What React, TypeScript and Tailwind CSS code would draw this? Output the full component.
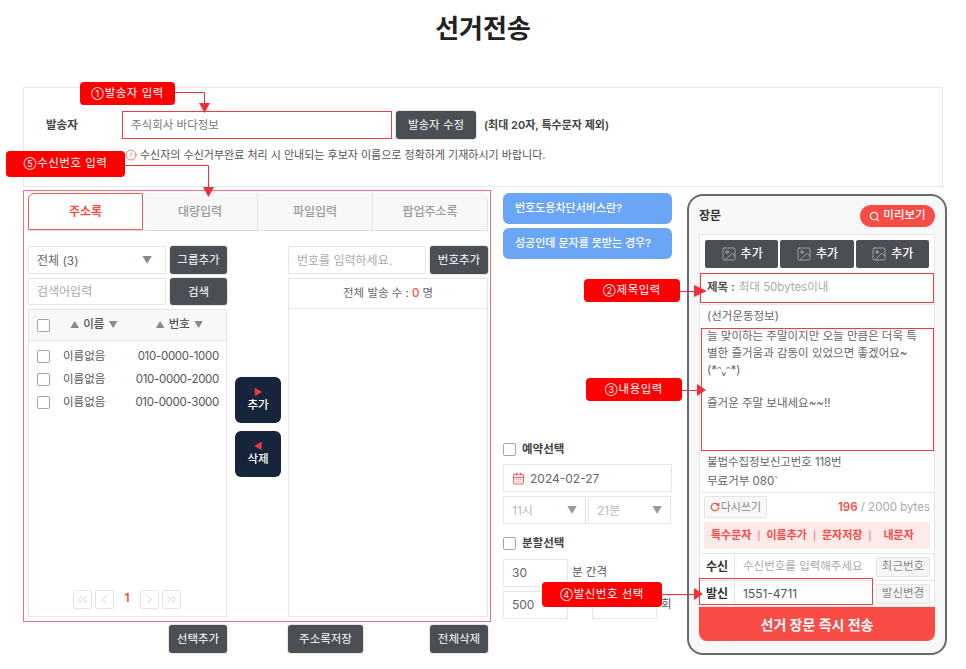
import React from 'react';
import {
  ChevronLeft,
  ChevronRight,
  ChevronsLeft,
  ChevronsRight,
  CircleAlert,
  CalendarDays,
  Image as ImageIcon,
  RotateCw,
  Search,
} from 'lucide-react';

const darkBtn = 'flex items-center justify-center rounded-[3px] bg-[#4b4f54] pt-[2px] text-white text-[11.5px] shadow-[0_0_0_1px_#e5e5e5]';
const field = 'flex items-center border border-[#e6e6e6] bg-white pt-[1px] text-[12px]';

function Check() {
  return <span className="block h-[13px] w-[13px] shrink-0 rounded-[2px] border border-[#a5a5a5] bg-white" />;
}

function Note({ num, text, className }: { num: string; text: string; className: string }) {
  return (
    <div className={'absolute flex items-center justify-center rounded-[4px] bg-[#fe0000] text-[11.5px] tracking-[0.5px] text-white ' + className}>
      <span className="mr-[1px] text-[9px] tracking-normal">{num}</span>{text}
    </div>
  );
}

function Outline({ className }: { className: string }) {
  return <div className={'pointer-events-none absolute border border-[#ef3c46] ' + className} />;
}

function Pager() {
  const box = 'flex h-[19px] w-[19px] items-center justify-center rounded-[2px] border border-[#e4e4e4] text-[#b5b5b5]';
  return (
    <div className="absolute bottom-[7px] left-[44px] flex items-center">
      <span className={box}><ChevronsLeft size={15} strokeWidth={1} /></span>
      <span className={box + ' ml-[3px]'}><ChevronLeft size={15} strokeWidth={1} /></span>
      <span className="w-[26px] pb-[2px] text-center text-[12px] font-semibold text-[#f94c46]">1</span>
      <span className={box}><ChevronRight size={15} strokeWidth={1} /></span>
      <span className={box + ' ml-[3px]'}><ChevronsRight size={15} strokeWidth={1} /></span>
    </div>
  );
}

function AddressTabs() {
  const tab = 'flex flex-1 items-center justify-center border-l border-[#e4e4e4] text-[12px] font-medium text-[#9a9a9a]';
  return (
    <div className="flex h-[38px] rounded-t-[8px] border-b border-[#e0e0e0] bg-[#f8f8f8]">
      <div className="flex w-[115px] items-center justify-center rounded-tl-[6px] border border-[#f65a5a] bg-white text-[12px] font-bold text-[#f94c46]">주소록</div>
      <div className={tab + ' border-l-0'}>대량입력</div>
      <div className={tab}>파일입력</div>
      <div className={tab + ' rounded-tr-[8px] border-r'}>팝업주소록</div>
    </div>
  );
}

function ContactTable() {
  const rows = [
    ['이름없음', '010-0000-1000'],
    ['이름없음', '010-0000-2000'],
    ['이름없음', '010-0000-3000'],
  ];
  return (
    <div className="relative mt-[4px] h-[308px] border border-[#e6e6e6]">
      <div className="flex h-[31px] items-center border-b border-[#e6e6e6] bg-[#f8f8f8] pl-[8px] text-[11.5px] font-medium text-[#555]">
        <Check />
        <span className="ml-[20px] flex items-center gap-[4px]"><span className="text-[9px] text-[#888]">▲</span>이름<span className="text-[9px] text-[#888]">▼</span></span>
        <span className="ml-[38px] flex items-center gap-[4px]"><span className="text-[9px] text-[#888]">▲</span>번호<span className="text-[9px] text-[#888]">▼</span></span>
      </div>
      <div className="flex flex-col pt-[4px]">
        {rows.map((r) => (
          <div key={r[1]} className="flex h-[23px] items-center pl-[8px] pr-[7px] text-[11.5px] text-[#555]">
            <Check />
            <span className="ml-[13px]">{r[0]}</span>
            <span className="ml-auto tracking-[-0.3px]">{r[1]}</span>
          </div>
        ))}
      </div>
      <Pager />
    </div>
  );
}

function AddressBook() {
  return (
    <div className="w-[468px]">
      <div className="h-[432px] border border-[#f2717c] pl-[4px] pr-[2px] pt-[2px]">
        <AddressTabs />
        <div className="mt-[15px] flex">
          <div className="w-[199px]">
            <div className="flex gap-[4px]">
              <div className={field + ' h-[28px] w-[138px] justify-between pl-[8px] pr-[13px] text-[#666]'}>전체 (3)<span className="text-[10px] text-[#888]">▼</span></div>
              <div className={darkBtn + ' h-[28px] w-[57px]'}>그룹추가</div>
            </div>
            <div className="mt-[4px] flex gap-[4px]">
              <div className={field + ' h-[27px] w-[138px] pl-[8px] text-[11.5px] text-[#aaa]'}>검색어입력</div>
              <div className={darkBtn + ' h-[27px] w-[57px]'}>검색</div>
            </div>
            <ContactTable />
          </div>
          <div className="flex w-[61px] flex-col gap-[8px] pl-[8px] pt-[131px]">
            <div className="flex h-[46px] w-[46px] flex-col items-center justify-center rounded-[6px] bg-[#16243c] text-[11.5px] font-medium text-white">
              <span className="text-[9px] leading-[11px] text-[#f03a3a]">▶</span>추가
            </div>
            <div className="flex h-[46px] w-[46px] flex-col items-center justify-center rounded-[6px] bg-[#16243c] text-[11.5px] font-medium text-white">
              <span className="text-[9px] leading-[11px] text-[#f03a3a]">◀</span>삭제
            </div>
          </div>
          <div className="w-[200px]">
            <div className="flex gap-[4px]">
              <div className={field + ' h-[28px] w-[138px] pl-[8px] text-[11.5px] text-[#aaa]'}>번호를 입력하세요.</div>
              <div className={darkBtn + ' h-[28px] w-[58px]'}>번호추가</div>
            </div>
            <div className="mt-[4px] flex h-[339px] flex-col border border-[#e6e6e6]">
              <div className="flex h-[30px] items-center justify-center gap-[3px] border-b border-[#e6e6e6] text-[11.5px] text-[#666]">
                전체 발송 수 : <span className="font-medium text-[#f94c46]">0</span> 명
              </div>
            </div>
          </div>
        </div>
      </div>
      <div className="mt-[3px] flex">
        <div className={darkBtn + ' ml-[146px] h-[28px] w-[58px]'}>선택추가</div>
        <div className={darkBtn + ' ml-[61px] h-[28px] w-[75px]'}>주소록저장</div>
        <div className={darkBtn + ' ml-[67px] h-[28px] w-[58px]'}>전체삭제</div>
      </div>
    </div>
  );
}

function Options() {
  return (
    <div className="ml-[12px] flex h-[432px] w-[169px] flex-col pt-[3px]">
      <div className="flex h-[31px] items-center rounded-[6px] bg-[#6aa5f6] pl-[12px] text-[11px] font-medium text-white">번호도용차단서비스란?</div>
      <div className="mt-[4px] flex h-[31px] items-center rounded-[6px] bg-[#6aa5f6] pl-[12px] text-[11px] font-medium text-white">성공인데 문자를 못받는 경우?</div>
      <div className="mt-[182px] flex items-center gap-[6px] text-[11.5px] font-semibold text-[#444]"><Check />예약선택</div>
      <div className={field + ' mt-[6px] h-[28px] gap-[5px] pl-[8px] text-[#666]'}>
        <CalendarDays size={13} className="text-[#f25c5c]" />
        2024-02-27
      </div>
      <div className="mt-[4px] flex gap-[2px]">
        <div className={field + ' h-[28px] w-[83px] justify-between px-[8px] text-[#bbb]'}>11시<span className="text-[10px] text-[#999]">▼</span></div>
        <div className={field + ' h-[28px] w-[83px] justify-between px-[8px] text-[#bbb]'}>21분<span className="text-[10px] text-[#999]">▼</span></div>
      </div>
      <div className="mt-[11px] flex items-center gap-[6px] text-[11.5px] font-semibold text-[#444]"><Check />분할선택</div>
      <div className="mt-[6px] flex items-center gap-[4px]">
        <div className={field + ' h-[28px] w-[65px] pl-[8px] text-[#666]'}>30</div>
        <span className="text-[11.5px] text-[#555]">분 간격</span>
      </div>
      <div className="mt-[4px] flex items-center">
        <div className={field + ' h-[28px] w-[65px] pl-[8px] text-[#666]'}>500</div>
        <div className={field + ' ml-[24px] h-[28px] w-[65px]'} />
        <span className="ml-[4px] text-[11.5px] text-[#555]">회</span>
      </div>
    </div>
  );
}

function Phone() {
  const addBtn = 'flex h-[28px] flex-1 items-center justify-center gap-[4px] rounded-[2px] bg-[#4b4f54] text-[12px] font-medium text-white';
  const sideBtn = 'ml-auto mr-[4px] flex h-[20px] w-[54px] items-center justify-center rounded-[2px] border border-[#e4e4e4] bg-[#f6f6f6] text-[11.5px] text-[#888]';
  return (
    <div className="ml-[15px] mt-[4px] flex h-[461px] w-[260px] flex-col rounded-[16px] border-2 border-[#666a6e] bg-[#f8f8f8] px-[10px] pt-[9px]">
      <div className="flex h-[22px] items-center justify-between">
        <span className="text-[12px] font-semibold text-[#333]">장문</span>
        <div className="flex h-[22px] w-[75px] items-center justify-center gap-[3px] rounded-full bg-[#f94c46] text-[11.5px] font-medium text-white">
          <Search size={11} strokeWidth={2.5} />미리보기
        </div>
      </div>
      <div className="mt-[7px] flex flex-col border border-[#e6e6e6] bg-white">
        <div className="flex gap-[2px] px-[5px] pt-[5px]">
          <div className={addBtn}><ImageIcon size={16} strokeWidth={1} className="text-[#c8c8c8]" />추가</div>
          <div className={addBtn}><ImageIcon size={16} strokeWidth={1} className="text-[#c8c8c8]" />추가</div>
          <div className={addBtn}><ImageIcon size={16} strokeWidth={1} className="text-[#c8c8c8]" />추가</div>
        </div>
        <div className="mt-[5px] flex h-[29px] items-center gap-[4px] pl-[7px] text-[11.5px]">
          <span className="font-semibold text-[#555]">제목 :</span>
          <span className="text-[#aaa]">최대 50bytes이내</span>
        </div>
        <div className="mt-[2px] border-t border-[#e6e6e6] px-[7px] pt-[3px] text-[11.5px] text-[#666]">
          <p className="h-[20px] leading-[17px]">(선거운동정보)</p>
          <p className="h-[125px] leading-[16.8px]">
            늘 맞이하는 주말이지만 오늘 만큼은 더욱 특별한 즐거움과 감동이 있었으면 좋겠어요~
            <br />(*ᵔᵥᵔ*)
            <br />
            <br />즐거운 주말 보내세요~~!!
          </p>
          <p className="leading-[19px] tracking-[-0.1px]">불법수집정보신고번호 118번</p>
          <p className="leading-[19px]">무료거부 080`</p>
        </div>
        <div className="mt-[1px] flex h-[29px] items-start justify-between border-t border-[#e6e6e6] px-[4px] pt-[3px]">
          <div className="flex h-[22px] w-[63px] items-center justify-center gap-[1px] rounded-[2px] border border-[#e4e4e4] bg-[#f8f8f8] text-[11px] text-[#888]">
            <RotateCw size={10} strokeWidth={3} className="text-[#f94c46]" />다시쓰기
          </div>
          <span className="pt-[3px] text-[11.5px] text-[#aaa]"><b className="font-semibold text-[#f94c46]">196</b> / 2000 bytes</span>
        </div>
        <div className="mx-[4px] mt-[1px] flex h-[27px] items-center bg-[#ffeaea] pl-[7px] text-[11px] font-semibold text-[#f94c46]">
          <span>특수문자</span>
          <span className="mx-[6px] text-[9px] font-normal">|</span>
          <span>이름추가</span>
          <span className="mx-[6px] text-[9px] font-normal">|</span>
          <span>문자저장</span>
          <span className="mx-[6px] text-[9px] font-normal">|</span>
          <span className="ml-[6px]">내문자</span>
        </div>
        <div className="mt-[4px] flex h-[27px] items-center border-t border-[#e6e6e6] text-[12px]">
          <span className="flex h-full w-[35px] items-center justify-center border-r border-[#e6e6e6] font-semibold text-[#333]">수신</span>
          <span className="ml-[8px] text-[11.5px] text-[#aaa]">수신번호를 입력해주세요</span>
          <span className={sideBtn}>최근번호</span>
        </div>
        <div className="flex h-[26px] items-center border-t border-[#e6e6e6] text-[12px]">
          <span className="flex h-full w-[35px] items-center justify-center border-r border-[#e6e6e6] font-semibold text-[#333]">발신</span>
          <span className="ml-[8px] text-[#555]">1551-4711</span>
          <span className={sideBtn}>발신변경</span>
        </div>
      </div>
      <div className="flex h-[34px] items-center justify-center rounded-b-[8px] bg-[#f94c46] text-[14px] font-bold text-white">선거 장문 즉시 전송</div>
    </div>
  );
}

export default function App() {
  return (
    <div className="relative h-[669px] w-[966px] overflow-hidden bg-white font-['Inter','Noto_Sans_CJK_KR',sans-serif] text-[#333]">
      <h1 className="pt-[10px] text-center text-[26px] font-bold leading-[38px] text-[#222]">선거전송</h1>

      <div className="ml-[23px] mt-[39px] h-[100px] w-[920px] border border-[#e9e9e9] pl-[22px] pt-[23px]">
        <div className="flex items-center">
          <span className="w-[76px] pt-[2px] text-[11.5px] font-semibold text-[#444]">발송자</span>
          <div className="flex h-[28px] w-[270px] items-center pl-[9px] pt-[1px] text-[11.5px] text-[#777]">주식회사 바다정보</div>
          <div className={darkBtn + ' ml-[4px] h-[28px] w-[80px]'}>발송자 수정</div>
          <span className="ml-[8px] pt-[1px] text-[11px] font-semibold text-[#444]">(최대 20자, 특수문자 제외)</span>
        </div>
        <div className="ml-[79px] mt-[8px] flex items-center gap-[3px] text-[11px] text-[#555]">
          <CircleAlert size={12} strokeWidth={1.5} className="text-[#f94c46]" />
          수신자의 수신거부완료 처리 시 안내되는 후보자 이름으로 정확하게 기재하시기 바랍니다.
        </div>
      </div>

      <div className="ml-[23px] mt-[3px] flex items-start">
        <AddressBook />
        <Options />
        <Phone />
      </div>

      <Outline className="left-[122px] top-[111px] h-[28px] w-[270px]" />
      <Outline className="left-[700px] top-[273px] h-[30px] w-[234px]" />
      <Outline className="left-[701px] top-[328px] h-[123px] w-[233px]" />
      <Outline className="left-[699px] top-[578px] h-[27px] w-[174px]" />

      <svg className="pointer-events-none absolute left-0 top-0" width="966" height="669" fill="none">
        <path d="M175 92.500H204.500V103" stroke="#ef2f3a" />
        <path d="M199 103H210L204.500 113Z" fill="#ef2f3a" />
        <path d="M125 165.500H208.500V188" stroke="#ef2f3a" />
        <path d="M203 187H214L208.500 197Z" fill="#ef2f3a" />
        <path d="M680 291.500H695" stroke="#ef2f3a" />
        <path d="M694 285V297L707 291Z" fill="#ef2f3a" />
        <path d="M675 390.500H698" stroke="#ef2f3a" />
        <path d="M697 384V396L706 390Z" fill="#ef2f3a" />
        <path d="M662 594.500H695" stroke="#ef2f3a" />
        <path d="M694 588V600L703 594Z" fill="#ef2f3a" />
      </svg>

      <Note num="①" text="발송자 입력" className="left-[80px] top-[82px] h-[23px] w-[95px]" />
      <Note num="⑤" text="수신번호 입력" className="left-[6px] top-[151px] h-[26px] w-[119px]" />
      <Note num="②" text="제목입력" className="left-[584px] top-[279px] h-[23px] w-[96px]" />
      <Note num="③" text="내용입력" className="left-[586px] top-[378px] h-[23px] w-[96px]" />
      <Note num="④" text="발신번호 선택" className="left-[542px] top-[582px] h-[25px] w-[120px]" />
    </div>
  );
}
